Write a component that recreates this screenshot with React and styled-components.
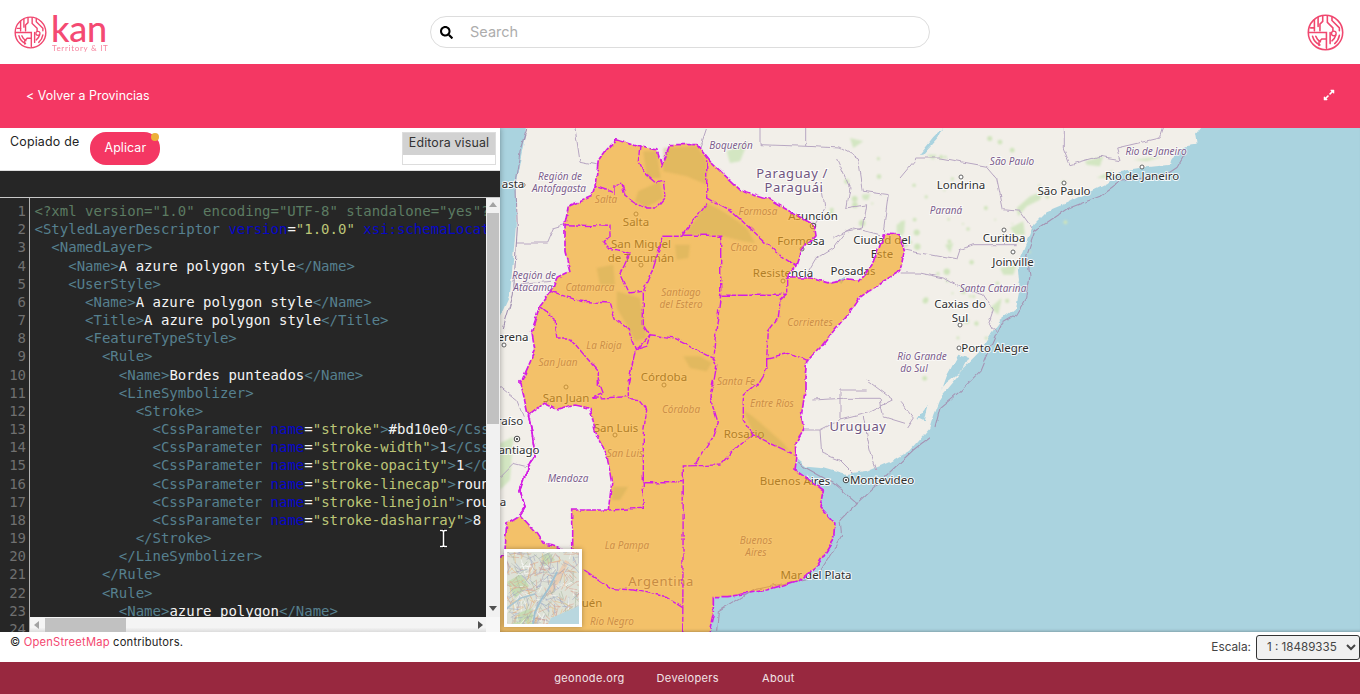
import React from 'react';
import styled, { createGlobalStyle } from 'styled-components';
import { FaSearch, FaExpandAlt } from 'react-icons/fa';

const UI = `Inter, "Open Sans", "Liberation Sans", sans-serif`;
const Global = createGlobalStyle`
  html, body { margin: 0; padding: 0; height: 100%; background: #fff; overflow: hidden; }
  #root { height: 100%; }
  * { box-sizing: border-box; }
`;

const Page = styled.div`display:flex;flex-direction:column;height:694px;width:1360px;font-family:${UI};overflow:hidden;`;
const Header = styled.header`height:64px;display:flex;align-items:center;justify-content:space-between;padding:0 14px;background:#fff;position:relative;`;
const Brand = styled.div`display:flex;align-items:center;gap:4px;width:416px;`;
const BrandWords = styled.div`display:flex;flex-direction:column;color:#f45a7d;padding-top:4px;`;
const BrandName = styled.span`font:500 36px/30px Lato,sans-serif;letter-spacing:-.2px;color:#f44a72;margin-top:-3px;`;
const BrandTag = styled.span`font:400 8px/9px Lato,sans-serif;letter-spacing:.7px;margin-left:1px;opacity:.75;margin-top:1px;`;
const SearchBox = styled.label`width:500px;height:32px;border:1px solid #ddd;border-radius:16px;display:flex;align-items:center;padding:0 9px;gap:17px;color:#000;`;
const SearchInput = styled.input`border:0;outline:0;flex:1;font:400 14.5px ${UI};background:transparent;padding:0 0 2px;&::placeholder{color:#adadad;}`;
const RightSlot = styled.div`width:416px;display:flex;justify-content:flex-end;padding-right:2px;margin-top:1px;`;
const Band = styled.div`height:64px;background:#f43763;display:flex;align-items:center;justify-content:space-between;padding:0 25px 2px 26px;color:#fff;`;
const BackLink = styled.a`font:400 12.4px ${UI};color:#fff;letter-spacing:.03px;`;
const Main = styled.main`height:504px;display:flex;overflow:hidden;`;
const Left = styled.section`width:500px;display:flex;flex-direction:column;position:relative;z-index:2;box-shadow:1px 0 5px rgba(0,0,0,.25);`;
const TopBar = styled.div`height:42px;background:#fff;display:flex;align-items:flex-start;padding:4px 4px 0 10px;`;
const Copied = styled.span`font:400 12.4px/20px ${UI};letter-spacing:.2px;color:#222;margin-right:11px;`;
const Apply = styled.button`position:relative;width:70px;height:33px;border:0;border-radius:16px;background:#f43763;color:#fff;font:400 12.4px ${UI};letter-spacing:.1px;padding:0 0 2px;&::after{content:'';position:absolute;top:1px;right:1px;width:8px;height:8px;border-radius:50%;background:#ecb03a;}`;
const VisualBox = styled.div`margin-left:auto;width:94px;height:33px;border:1px solid #ddd;`;
const VisualTab = styled.div`height:22px;background:#d2d2d2;font:400 12.4px/20px ${UI};letter-spacing:.15px;color:#333;text-align:center;white-space:nowrap;`;
const DarkBar = styled.div`height:28px;background:#262626;border-bottom:1px solid #c8c8c8;border-top:1px solid #ddd;`;
const Editor = styled.div`flex:1;min-height:0;display:flex;background:#262626;position:relative;`;
const Gutter = styled.div`width:30px;border-right:1px solid #b5b5b5;padding-top:4px;overflow:hidden;background:#262626;`;
const LineNo = styled.div`height:18.18px;font:14px/18.18px "DejaVu Sans Mono",monospace;color:#707070;text-align:right;padding-right:3px;`;
const EditorMain = styled.div`flex:1;min-width:0;display:flex;flex-direction:column;`;
const EditorRow = styled.div`flex:1;min-height:0;display:flex;`;
const Code = styled.div`flex:1;min-width:0;overflow:hidden;padding:4px 0 0 4.5px;`;
const Line = styled.div`height:18.18px;font:14px/18.18px "DejaVu Sans Mono",monospace;white-space:pre;color:#f4f4f4;`;
const Tag = styled.span`color:#56808f;`;
const Pi = styled.span`color:#5c7b62;`;
const Attr = styled.span`color:#0707c8;`;
const Str = styled.span`color:#bcc577;`;
const VScroll = styled.div`width:14px;background:#f1f1f1;display:flex;flex-direction:column;align-items:center;padding-top:4px;`;
const ArrowUp = styled.i`width:0;height:0;border:4px solid transparent;border-top:0;border-bottom:5px solid #a3a3a3;margin-bottom:6px;`;
const VThumb = styled.div`width:12px;height:211px;background:#c1c1c1;`;
const ArrowDown = styled.i`width:0;height:0;border:4px solid transparent;border-bottom:0;border-top:5px solid #505050;margin-top:auto;margin-bottom:6px;`;
const HRow = styled.div`height:15px;display:flex;background:#f1f1f1;`;
const HScroll = styled.div`flex:1;display:flex;align-items:center;padding-left:4px;background:linear-gradient(#f4f4f4 70%,#dcdcdc);`;
const ArrowLeft = styled.i`width:0;height:0;border:4px solid transparent;border-left:0;border-right:5px solid #a3a3a3;margin-right:6px;`;
const HThumb = styled.div`width:81px;height:14px;background:#c1c1c1;`;
const ArrowRight = styled.i`width:0;height:0;border:4px solid transparent;border-right:0;border-left:5px solid #505050;margin-left:auto;margin-right:3px;`;
const Corner = styled.div`width:14px;background:#f7f7f7;`;
const Ibeam = styled.svg`position:absolute;left:438px;top:331px;`;
const MapPane = styled.div`flex:1;position:relative;overflow:hidden;background:#aad3df;`;
const MapSvg = styled.svg`display:block;width:860px;height:504px;`;
const MapEdge = styled.div`position:absolute;inset:0;pointer-events:none;box-shadow:inset 0 -3px 3px -2px rgba(0,0,0,.25);`;
const Mini = styled.div`position:absolute;left:4px;top:421px;width:78px;height:78px;border:3px solid #fff;background:#dfe2d6;box-shadow:0 0 5px rgba(0,0,0,.3);`;
const Strip = styled.div`height:30px;background:#fff;display:flex;justify-content:space-between;padding:0 0 0 10px;`;
const Attribution = styled.div`font:400 11.2px/20px ${UI};letter-spacing:.2px;color:#222;`;
const OsmLink = styled.a`color:#f4476f;`;
const Scale = styled.div`display:flex;align-items:center;gap:5px;height:30px;font:400 11.8px ${UI};color:#444;`;
const ScaleSelect = styled.select`width:104px;height:25px;border:1px solid #333;border-radius:3px;background:#f0f0f0;font:400 11.6px ${UI};color:#444;padding-left:6px;`;
const Footer = styled.footer`height:32px;background:#98283f;display:flex;align-items:center;justify-content:center;color:#f2e4e7;font:400 11px ${UI};letter-spacing:.35px;`;
const FootLink = styled.a`margin:0 ${p => p.$gap || 16}px;`;

const City = styled.text`font:${p => p.$s || 11.5}px "Noto Sans",sans-serif;fill:#2f2f2f;stroke:#fff;stroke-width:2px;stroke-opacity:.85;paint-order:stroke;text-anchor:middle;`;
const State = styled.text`font:italic 10px "Noto Sans",sans-serif;fill:#7d5e8c;stroke:#fff;stroke-width:1.6px;stroke-opacity:.8;paint-order:stroke;text-anchor:middle;`;
const Country = styled.text`font:13px "Noto Sans",sans-serif;letter-spacing:.6px;fill:#6f5580;stroke:#fff;stroke-width:2px;stroke-opacity:.8;paint-order:stroke;text-anchor:middle;`;

const mk = (ox, oy) => pts => pts.map(([x, y]) => [ox + x / 3, oy + y / 3]);
const Z5 = mk(500, 128), Z6 = mk(500, 380), Z7 = mk(900, 128);
const S = pts => pts.map(p => p.map(n => n.toFixed(1)).join(',')).join(' ');

const westCoast = Z5([[80, -20], [70, 50], [50, 150], [47, 300], [30, 500], [-20, 610]]);
const eastCoast = [
  ...Z7([[915, -20], [885, 20], [890, 50], [855, 55], [815, 90], [810, 110], [720, 120], [660, 130], [620, 165], [570, 190], [500, 225], [440, 250], [400, 290], [380, 340], [355, 400], [360, 460], [350, 510], [345, 545], [300, 580], [270, 620], [240, 670], [190, 720], [170, 750], [120, 810], [100, 860], [88, 900]]),
  ...Z6([[1230, 210], [1170, 245], [1100, 275], [1040, 285], [970, 265], [920, 260], [895, 240], [885, 270], [970, 330], [960, 380], [1005, 430], [1000, 480], [950, 560], [900, 600], [800, 630], [680, 650], [640, 650], [640, 700], [620, 790]]),
];
const landPoly = [[490, 645], [490, 330], ...westCoast.slice().reverse(), ...eastCoast];

const argOutline = [
  ...Z5([[350, 35], [410, 55], [470, 65], [485, 110], [510, 50], [590, 50], [630, 100], [720, 185], [800, 210], [940, 290], [945, 320], [905, 370], [890, 415], [860, 450], [930, 450], [990, 465], [1040, 455], [1075, 460], [1115, 415], [1145, 340], [1150, 318], [1200, 320], [1213, 370], [1200, 430], [1150, 460], [1075, 512], [1050, 550], [1000, 610], [960, 660], [920, 700], [915, 750]]),
  ...Z6([[915, 30], [905, 100], [910, 150], [885, 190], [890, 240], [885, 270], [970, 330], [960, 380], [1005, 430], [1000, 480], [950, 560], [900, 600], [800, 630], [680, 650], [640, 650], [640, 700], [620, 790]]),
  [492, 645],
  ...Z6([[-20, 570], [15, 510], [20, 430], [60, 405], [75, 380], [60, 330], [85, 260], [105, 230], [95, 150], [85, 105], [60, 0]]),
  ...Z5([[60, 770], [105, 670], [95, 610], [120, 535], [155, 490], [170, 450], [210, 430], [195, 370], [195, 285], [205, 235], [275, 205], [285, 175], [295, 100], [320, 65]]),
];
const mendoza = Z6([[85, 105], [130, 70], [175, 90], [225, 75], [270, 85], [285, 150], [320, 220], [335, 310], [325, 390], [215, 390], [215, 520], [160, 495], [130, 490], [110, 460], [60, 405], [75, 380], [60, 330], [85, 260], [105, 230], [95, 150]]);

const provinces = [
  Z5([[420, 55], [415, 100], [430, 130], [470, 165], [490, 160], [495, 210], [470, 240], [440, 240], [405, 225], [375, 205], [365, 165], [345, 170], [345, 195], [285, 175]]),
  Z5([[620, 100], [620, 210], [700, 255], [760, 310], [830, 375], [890, 415]]),
  Z5([[620, 225], [545, 325], [490, 325], [460, 420], [430, 490], [430, 590], [450, 620]]),
  Z5([[550, 322], [662, 322], [662, 500], [640, 680]]),
  Z5([[665, 502], [860, 502]]),
  Z5([[860, 450], [860, 500], [840, 520], [835, 570], [805, 610], [800, 690], [870, 675], [925, 700]]),
  [...Z5([[800, 690], [800, 720], [770, 770]]), ...Z6([[770, 10], [730, 45], [730, 120], [760, 165], [885, 225]])],
  Z6([[760, 165], [715, 195], [660, 255], [550, 258], [548, 790]]),
  [...Z5([[410, 665], [450, 620], [520, 630], [600, 670], [640, 690], [650, 710], [640, 770]]), ...Z6([[640, 0], [630, 50], [655, 130], [640, 170], [585, 255]])],
  [...Z5([[405, 670], [385, 770]]), ...Z6([[385, 0], [385, 50], [275, 55]])],
  Z6([[385, 55], [415, 60], [440, 90], [430, 160], [430, 385], [325, 390]]),
  Z6([[430, 305], [548, 305]]),
  Z6([[250, 570], [330, 625], [400, 630], [500, 650], [548, 680]]),
  Z5([[155, 490], [240, 520], [330, 525], [345, 570], [385, 600], [405, 665], [440, 655], [450, 620]]),
  [...Z5([[120, 535], [165, 570], [170, 630], [210, 630], [260, 690], [295, 730], [295, 770]]), ...Z6([[295, 0], [310, 40], [275, 55]])],
  Z5([[195, 290], [330, 295], [330, 325], [310, 340], [330, 360], [390, 375], [360, 440], [385, 495], [430, 490]]),
];

const forest = [
  Z5([[620, 225], [660, 245], [700, 270], [740, 300], [765, 345], [730, 340], [670, 325], [610, 320], [555, 320]]),
  Z5([[430, 70], [470, 70], [482, 150], [440, 150]]),
  Z5([[415, 190], [480, 160], [490, 210], [440, 238], [405, 220]]),
  Z5([[490, 60], [590, 55], [620, 100], [620, 170], [560, 145], [490, 130]]),
  Z5([[290, 420], [340, 410], [345, 470], [300, 470]]),
  Z5([[350, 490], [420, 510], [440, 630], [405, 640], [380, 590], [350, 540]]),
  Z5([[550, 685], [600, 685], [635, 705], [620, 730], [570, 720]]),
  Z5([[525, 350], [570, 350], [565, 390], [530, 395]]),
  Z6([[730, 90], [760, 110], [850, 190], [870, 215], [830, 200], [760, 160]]),
  Z6([[340, 320], [385, 320], [360, 360], [335, 360]]),
];

const borders = [
  Z5([[600, 60], [620, 0]]), Z5([[780, 0], [780, 50], [920, 55], [1020, 60], [1075, 90], [1090, 190], [1165, 200], [1150, 310]]),
  Z5([[920, 0], [920, 55]]), Z5([[225, 0], [240, 100], [290, 110]]),
  Z5([[195, 290], [160, 300], [140, 345], [50, 345]]), Z5([[60, 470], [150, 460]]),
  Z5([[965, 180], [975, 240], [940, 300]]), Z5([[1010, 90], [1050, 180], [1040, 240], [1100, 230], [1090, 300], [1040, 310], [1000, 360], [950, 390], [920, 440]]),
  Z5([[1140, 320], [1060, 300], [1000, 330]]),
  Z7([[0, 150], [50, 90], [120, 90], [260, 115], [290, 150], [310, 245], [360, 250], [400, 305]]),
  Z7([[490, 0], [490, 60], [510, 110], [600, 85], [660, 95], [650, 60], [780, 30], [790, 0]]),
  Z7([[10, 365], [60, 375], [170, 395], [180, 365], [220, 350], [350, 350]]),
  Z7([[5, 435], [60, 435], [130, 450], [180, 480], [250, 500], [280, 545], [265, 590], [290, 610]]),
  Z7([[0, 820], [40, 870], [20, 900]]),
  Z6([[910, 150], [960, 150], [1020, 120], [1100, 100], [1180, 60], [1100, 0]]),
  Z6([[960, 150], [965, 220], [1020, 240], [1060, 280]]), Z6([[1020, 120], [1020, 30], [1100, 30]]), Z6([[1090, 110], [1110, 210], [1130, 270]]),
  Z6([[940, 60], [1030, 55], [1140, 55], [1150, 110], [1215, 130]]),
  Z6([[0, 20], [50, 60], [70, 110]]), Z6([[0, 290], [40, 250], [80, 260]]),
];
const maritime = [
  Z7([[860, 70], [830, 120], [800, 140], [660, 160], [600, 205], [500, 243], [405, 308], [380, 380], [390, 440], [380, 510], [350, 560], [300, 590], [260, 680], [240, 730], [180, 790], [120, 840], [105, 900]]),
  Z6([[650, 755], [655, 695], [760, 630], [950, 590], [1025, 470], [1020, 420], [1070, 370], [1240, 210], [1290, 170]]),
  Z6([[895, 250], [920, 265], [1000, 310], [1070, 370]]),
  Z5([[80, 0], [62, 60], [47, 150], [52, 300], [40, 500], [10, 600]]),
];
const green = [
  Z7([[350, 240], [390, 205], [430, 190], [420, 215], [380, 235], [355, 265]]), Z7([[330, 300], [370, 280], [375, 320], [345, 320]]),
  Z7([[300, 420], [350, 410], [340, 440], [310, 440]]), Z7([[270, 540], [305, 510], [295, 560]]), Z7([[555, 100], [610, 85], [600, 115], [560, 110]]),
  Z7([[590, 150], [640, 125], [620, 150]]), Z7([[700, 95], [790, 85], [740, 100]]), Z7([[135, 350], [160, 345], [150, 375]]), Z7([[80, 80], [110, 80], [100, 95]]),
  Z5([[1190, 290], [1215, 275], [1205, 315], [1190, 315]]), Z5([[1085, 200], [1110, 198], [1105, 215], [1090, 215]]), Z5([[680, 70], [745, 40], [720, 100], [690, 105]]), Z5([[1050, 30], [1090, 40], [1060, 60]]),
  Z7([[0, 280], [15, 280], [12, 315], [0, 330]]), Z6([[0, 190], [40, 170], [30, 300], [0, 330]]), Z6([[150, 170], [165, 180], [150, 190]]), Z6([[175, 380], [190, 378], [180, 392]]),
];
const water = [
  Z7([[175, 680], [205, 690], [180, 735], [130, 775], [122, 795], [140, 745]]), Z7([[85, 830], [55, 870], [75, 880]]),
  Z5([[1000, 460], [1040, 445], [1025, 470]]), Z6([[1250, 120], [1285, 75], [1275, 110]]), Z7([[100, 30], [130, 0], [115, 30], [70, 80], [60, 80]]),
  Z6([[150, 345], [165, 350], [160, 372], [150, 365]]),
];

const cities = [
  ['asta', 513, 188], ['Salta', 636, 226], ['San Miguel', 641, 248], ['de Tucumán', 641, 262], ['Formosa', 801, 245],
  ['Asunción', 813, 220], ['Ciudad del', 882, 244], ['Este', 882, 258], ['Posadas', 853, 275], ['Resistencia', 783, 277],
  ['Córdoba', 664, 381], ['San Juan', 566, 402], ['San Luis', 616, 432], ['Rosario', 744, 438], ['Buenos Aires', 795, 485],
  ['Montevideo', 882, 484], ['Mar del Plata', 816, 579], ['Londrina', 961, 189], ['São Paulo', 1064, 195], ['Rio de Janeiro', 1142, 180],
  ['Curitiba', 1004, 242], ['Joinville', 1013, 266], ['Caxias do', 960, 308], ['Sul', 960, 322], ['Porto Alegre', 995, 352],
  ['erena', 513, 341], ['uén', 592, 607],
];
const topCities = [['raíso', 510, 425], ['antiago', 519, 454], ['a', 503, 506]];
const states = [
  ['Boquerón', 731, 149], ['Región de', 560, 180], ['Antofagasta', 559, 192], ['Salta', 606, 203], ['Formosa', 758, 215], ['Chaco', 744, 251],
  ['Santiago', 681, 296], ['del Estero', 681, 308], ['Catamarca', 590, 291], ['Región de', 534, 279], ['Atacama', 533, 291], ['La Rioja', 604, 349],
  ['San Juan', 558, 366], ['Corrientes', 810, 326], ['Santa Fe', 736, 385], ['Córdoba', 681, 413], ['San Luis', 625, 457], ['Entre Ríos', 772, 407],
  ['La Pampa', 627, 549], ['Buenos', 756, 544], ['Aires', 756, 556], ['Río Negro', 612, 625], ['São Paulo', 1012, 165],
  ['Rio de Janeiro', 1156, 155], ['Paraná', 946, 214], ['Santa Catarina', 993, 292], ['Rio Grande', 922, 360], ['do Sul', 914, 372],
];
const countries = [['Paraguay /', 792, 178], ['Paraguái', 794, 192], ['Uruguay', 858, 431], ['Argentina', 661, 586]];
const dots = [[636, 214], [641, 265], [783, 281], [664, 385], [566, 387], [615, 435], [961, 177], [1064, 183], [1142, 167], [1004, 230], [1013, 252], [960, 325], [959, 348], [504, 345], [523, 185], [802, 249]];
const rings = [[813, 226], [517, 439], [846, 480]];

function rng(seed) { let s = seed; return () => (s = (s * 16807) % 2147483647) / 2147483647; }
const miniRoads = (() => {
  const r = rng(77); const out = [];
  const cols = ['#dd9f88', '#e8bd80', '#b9b9b9', '#a4a4be', '#d9a595', '#ffffff', '#a8b8a0', '#9aa8c8'];
  for (let i = 0; i < 420; i++) {
    const x = r() * 72, y = r() * 72, a = r() * 6.28, l = 3 + r() * 11;
    out.push({ d: `M${x.toFixed(1)} ${y.toFixed(1)}L${(x + Math.cos(a) * l).toFixed(1)} ${(y + Math.sin(a) * l).toFixed(1)}`, c: cols[Math.floor(r() * cols.length)] });
  }
  return out;
})();
const specks = (() => {
  const r = rng(4242); const out = [];
  for (let i = 0; i < 90; i++) {
    const x = 830 + r() * 260, y = 130 + r() * 260;
    if (x < 1165 - (y - 130) * 0.62 - 40 && !(x < 905 && y > 225)) out.push([x, y, .8 + r() * 2.4]);
  }
  return out;
})();

const Mark = ({ size }) => (
  <svg width={size} height={size} viewBox="0 0 40 40" fill="none" stroke="#f0476f" strokeWidth="1.7" strokeLinecap="round">
    <circle cx="20" cy="20" r="18.6" />
    <path d="M6 24a14.500 14.500 0 0 0 8 9.500M9.500 24a11 11 0 0 0 5 6M30 32a15 15 0 0 0 5-9M27 29a11 11 0 0 0 4-6" />
    <path d="M2 20h19v7h-5l-3 3v4M21 27v10M17 2v6l-3 3v7M12 3.500v10M8 6v12M22 2v7l6 6v3M27 3v4l8 8v3" />
    <path d="M4 15h4M25 20v12" />
    <circle cx="29" cy="21" r="2.500" strokeWidth="1.500" />
  </svg>
);

const T = ({ c }) => <Tag>{c}</Tag>;
const P = (n, v, tail = '') => <><Tag>{'<CssParameter '}</Tag><Attr>name</Attr>=<Str>"{n}"</Str><Tag>{'>'}</Tag>{v}<Tag>{tail}</Tag></>;
const lines = [
  <Pi>{'<?xml version="1.0" encoding="UTF-8" standalone="yes"?>'}</Pi>,
  <><Tag>{'<StyledLayerDescriptor '}</Tag><Attr>version</Attr>=<Str>"1.0.0"</Str> <Attr>xsi:schemaLocation</Attr></>,
  <>{'  '}<T c="<NamedLayer>" /></>,
  <>{'    '}<T c="<Name>" />A azure polygon style<T c="</Name>" /></>,
  <>{'    '}<T c="<UserStyle>" /></>,
  <>{'      '}<T c="<Name>" />A azure polygon style<T c="</Name>" /></>,
  <>{'      '}<T c="<Title>" />A azure polygon style<T c="</Title>" /></>,
  <>{'      '}<T c="<FeatureTypeStyle>" /></>,
  <>{'        '}<T c="<Rule>" /></>,
  <>{'          '}<T c="<Name>" />Bordes punteados<T c="</Name>" /></>,
  <>{'          '}<T c="<LineSymbolizer>" /></>,
  <>{'            '}<T c="<Stroke>" /></>,
  <>{'              '}{P('stroke', '#bd10e0', '</CssParameter>')}</>,
  <>{'              '}{P('stroke-width', '1', '</CssParameter>')}</>,
  <>{'              '}{P('stroke-opacity', '1', '</CssParameter>')}</>,
  <>{'              '}{P('stroke-linecap', 'round', '</CssParameter>')}</>,
  <>{'              '}{P('stroke-linejoin', 'round', '</CssParameter>')}</>,
  <>{'              '}{P('stroke-dasharray', '8')}</>,
  <>{'            '}<T c="</Stroke>" /></>,
  <>{'          '}<T c="</LineSymbolizer>" /></>,
  <>{'        '}<T c="</Rule>" /></>,
  <>{'        '}<T c="<Rule>" /></>,
  <>{'          '}<T c="<Name>" />azure polygon<T c="</Name>" /></>,
];

const dash = '9 1.5 5 1.5';
const MAG = '#d41ee4';
const beam = 'M2 1.500h2.500l1 1 1-1H9M5.500 2.500v14M2 17.500h2.500l1-1 1 1H9';

export default function App() {
  return (
    <Page>
      <Global />
      <Header>
        <Brand>
          <Mark size={33} />
          <BrandWords>
            <BrandName>kan</BrandName>
            <BrandTag>Territory &amp; IT</BrandTag>
          </BrandWords>
        </Brand>
        <SearchBox>
          <FaSearch size={13} />
          <SearchInput placeholder="Search" />
        </SearchBox>
        <RightSlot><Mark size={37} /></RightSlot>
      </Header>
      <Band>
        <BackLink>&lt; Volver a Provincias</BackLink>
        <FaExpandAlt size={12} />
      </Band>
      <Main>
        <Left>
          <TopBar>
            <Copied>Copiado de</Copied>
            <Apply>Aplicar</Apply>
            <VisualBox><VisualTab>Editora visual</VisualTab></VisualBox>
          </TopBar>
          <DarkBar />
          <Editor>
            <Gutter>
              {Array.from({ length: 24 }, (_, i) => <LineNo key={i}>{i + 1}</LineNo>)}
            </Gutter>
            <EditorMain>
              <EditorRow>
                <Code>{lines.map((l, i) => <Line key={i}>{l}</Line>)}</Code>
                <VScroll><ArrowUp /><VThumb /><ArrowDown /></VScroll>
              </EditorRow>
              <HRow>
                <HScroll><ArrowLeft /><HThumb /><ArrowRight /></HScroll>
                <Corner />
              </HRow>
            </EditorMain>
            <Ibeam width="11" height="19" viewBox="0 0 11 19">
              <path d={beam} fill="none" stroke="#000" strokeWidth="3.400" />
              <path d={beam} fill="none" stroke="#fff" strokeWidth="1.600" />
            </Ibeam>
          </Editor>
        </Left>
        <MapPane>
          <MapSvg viewBox="500 128 860 504">
            <defs>
              <filter id="wiggle" filterUnits="userSpaceOnUse" x="480" y="110" width="900" height="540">
                <feTurbulence type="fractalNoise" baseFrequency=".09" numOctaves="2" seed="5" />
                <feDisplacementMap in="SourceGraphic" scale="5" xChannelSelector="R" yChannelSelector="G" />
              </filter>
              <filter id="soft" filterUnits="userSpaceOnUse" x="480" y="110" width="900" height="540">
                <feGaussianBlur stdDeviation="1.200" />
              </filter>
            </defs>
            <rect x="500" y="128" width="860" height="504" fill="#aad3df" />
            <g filter="url(#wiggle)">
              <polygon points={S(landPoly)} fill="#f2efe9" />
            </g>
            <g filter="url(#soft)">
              {green.map((g, i) => <polygon key={i} points={S(g)} fill="#d3e6c2" />)}
              {specks.map(([x, y, r], i) => <circle key={i} cx={x} cy={y} r={r} fill="#cfe4bb" />)}
            </g>
            <g filter="url(#wiggle)">
              {water.map((g, i) => <polygon key={i} points={S(g)} fill="#aad3df" />)}
              {borders.map((b, i) => <polyline key={i} points={S(b)} fill="none" stroke="#b7a6c2" strokeWidth="1" />)}
              {maritime.map((b, i) => <polyline key={i} points={S(b)} fill="none" stroke="#a595b4" strokeWidth="1.100" />)}
            </g>
            {dots.map(([x, y], i) => <circle key={i} cx={x} cy={y} r="2" fill="#fff" stroke="#555" strokeWidth=".9" />)}
            {rings.map(([x, y], i) => <g key={i}><circle cx={x} cy={y} r="2.800" fill="#fff" stroke="#333" strokeWidth=".9" /><circle cx={x} cy={y} r="1.100" fill="#333" /></g>)}
            {states.map(([t, x, y], i) => <State key={i} x={x} y={y}>{t}</State>)}
            {cities.map(([t, x, y, s], i) => <City key={i} x={x} y={y} $s={s}>{t}</City>)}
            {countries.map(([t, x, y], i) => <Country key={i} x={x} y={y}>{t}</Country>)}
            <g filter="url(#wiggle)">
              <polygon points={S(argOutline)} fill="#f5a826" fillOpacity=".65" />
              <polygon points={S(mendoza)} fill="#f2efe9" />
            </g>
            <g filter="url(#soft)">
              {forest.map((g, i) => <polygon key={i} points={S(g)} fill="#b8a648" fillOpacity=".3" />)}
            </g>
            <g filter="url(#wiggle)">
              <polyline points={S([...mendoza, mendoza[0]])} fill="none" stroke={MAG} strokeWidth="1.600" strokeDasharray={dash} />
              {provinces.map((p, i) => <polyline key={i} points={S(p)} fill="none" stroke={MAG} strokeWidth="1.400" strokeDasharray={dash} />)}
              <polygon points={S(argOutline)} fill="none" stroke={MAG} strokeWidth="1.700" strokeDasharray={dash} />
            </g>
            <State x={568} y={482}>Mendoza</State>
            {topCities.map(([t, x, y], i) => <City key={i} x={x} y={y}>{t}</City>)}
          </MapSvg>
          <MapEdge />
          <Mini>
            <svg width="72" height="72" viewBox="0 0 72 72">
              <rect width="72" height="72" fill="#dde1d6" />
              <path d="M0 30l14-8 8 12-14 12z M10 62l14-6 4 16H6z M34 4l8-4 6 8-10 6z" fill="#c6dcb4" />
              <path d="M58 8L46 30l-6 12 4 2 8-14 10-20z" fill="#e9cdb4" />
              {miniRoads.map((r, i) => <path key={i} d={r.d} stroke={r.c} strokeWidth=".55" fill="none" />)}
              <path d="M72 54L44 66l-3 6h31z" fill="#b9d7df" />
              <path d="M50 20L42 36 34 48 28 60 26 72" stroke="#9fc0cf" strokeWidth="1.800" fill="none" />
              <path d="M0 56L14 46 28 42" stroke="#a8c4d0" strokeWidth="1.500" fill="none" />
            </svg>
          </Mini>
        </MapPane>
      </Main>
      <Strip>
        <Attribution>© <OsmLink>OpenStreetMap</OsmLink> contributors.</Attribution>
        <Scale>
          Escala:
          <ScaleSelect defaultValue="a"><option value="a">1 : 18489335</option></ScaleSelect>
        </Scale>
      </Strip>
      <Footer>
        <FootLink $gap={16}>geonode.org</FootLink>
        <FootLink $gap={16}>Developers</FootLink>
        <FootLink $gap={27}>About</FootLink>
      </Footer>
    </Page>
  );
}
